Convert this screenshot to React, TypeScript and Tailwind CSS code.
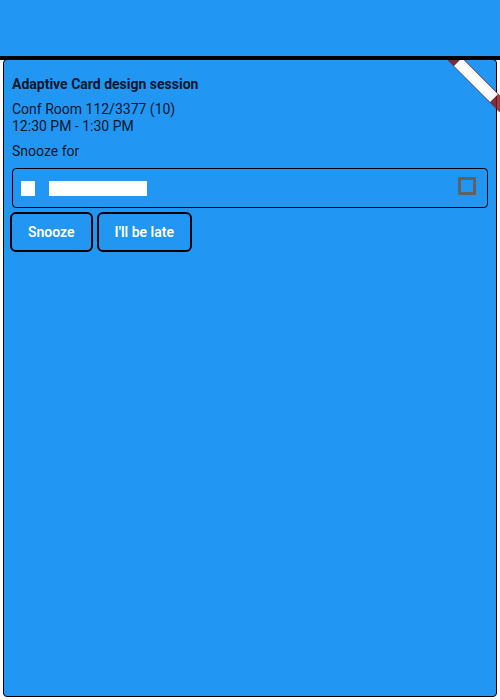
import React from "react";

function Banner() {
  return (
    <svg
      className="pointer-events-none absolute top-0 right-0 h-13 w-13"
      viewBox="-52 4 52 52"
      aria-hidden="true"
    >
      <g transform="rotate(45)">
        <rect x="-40" y="28" width="80" height="12" fill="#000" fillOpacity="0.5" />
        <rect x="-40" y="28" width="80" height="12" fill="#b71c1c" fillOpacity="0.63" />
        <rect x="-25.5" y="28.5" width="51" height="11" fill="#fff" />
      </g>
    </svg>
  );
}

function SnoozeSelect() {
  return (
    <div className="relative mt-2 flex h-10 items-center rounded-sm border border-black pr-[11px] pl-2">
      <span className="h-[15px] w-3.5 bg-white" />
      <span className="ml-3.5 h-[15px] w-[98px] bg-white" />
      <span className="mb-1 ml-auto size-[18px] border-3 border-[#616161]" />
      <select
        id="snooze"
        className="absolute inset-0 h-full w-full cursor-pointer appearance-none rounded-sm bg-transparent"
      >
        <option value="5" aria-label="5 minutes" />
      </select>
    </div>
  );
}

function ActionButton({ children }: { children: React.ReactNode }) {
  return (
    <button
      type="button"
      className="h-10 rounded-md border-2 border-black px-4 text-sm font-semibold text-white"
    >
      {children}
    </button>
  );
}

export default function App() {
  return (
    <div className="flex min-h-screen flex-col bg-[#fafafa] font-[Roboto,sans-serif] text-sm leading-[17px] text-black/87">
      <header className="h-15 border-b-4 border-black bg-[#2196f3]" />
      <main className="relative flex grow flex-col px-[3px] pb-[3px]">
        <section className="-mt-px grow rounded-sm border border-black bg-[#2196f3] px-2 pt-4">
          <h1 className="leading-[17px] font-bold">Adaptive Card design session</h1>
          <p className="mt-2 leading-[17px]">
            Conf Room 112/3377 (10)
            <br />
            12:30 PM - 1:30 PM
          </p>
          <label htmlFor="snooze" className="mt-2 block leading-[17px]">
            Snooze for
          </label>
          <SnoozeSelect />
          <div className="-mx-0.5 mt-1 flex gap-1">
            <ActionButton>Snooze</ActionButton>
            <ActionButton>I'll be late</ActionButton>
          </div>
        </section>
        <Banner />
      </main>
    </div>
  );
}
